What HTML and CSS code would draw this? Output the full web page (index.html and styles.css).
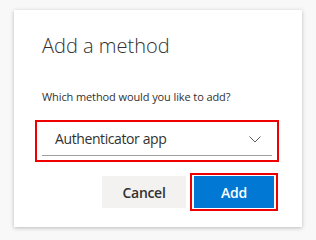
FILE: index.html
```html
<!DOCTYPE html>
<html lang="en">
<head>
    <meta charset="UTF-8">
    <meta name="viewport" content="width=device-width, initial-scale=1.0">
    <title>Add a method</title>
    <link rel="stylesheet" href="styles.css">
</head>
<body>
    <!-- Dialog card -->
    <div class="dialog">
        <h1 class="dialog-title">Add a method</h1>
        <p class="dialog-question">Which method would you like to add?</p>

        <!-- Method picker, outlined in red -->
        <div class="highlight select-box">
            <div class="select">
                <span class="select-value">Authenticator app</span>
                <svg class="chevron" width="12" height="7" viewBox="0 0 12 7">
                    <polyline points="0.5,0.5 6,6 11.5,0.5" fill="none" stroke="#605e5c" stroke-width="1"/>
                </svg>
            </div>
        </div>

        <div class="actions">
            <button class="btn btn-default">Cancel</button>
            <div class="highlight add-box">
                <button class="btn btn-primary">Add</button>
            </div>
        </div>
    </div>
</body>
</html>
```

FILE: styles.css
```css
/* Global Styles */
body, html {
    margin: 0;
    padding: 0;
    background: #f8f8f8;
    font-family: 'Open Sans', 'Noto Sans', sans-serif;
    color: #323130;
}

body {
    padding: 10px 14px;
}

/* Dialog */
.dialog {
    box-sizing: border-box;
    width: 288px;
    height: 217px;
    background: #ffffff;
    box-shadow: 0px 1px 4px rgba(0, 0, 0, 0.25);
    padding: 22px 23px 0 21px;
}

.dialog-title {
    margin: 0 0 0 7px;
    font-size: 20px;
    font-weight: 300;
    line-height: 28px;
    color: #323130;
}

.dialog-question {
    margin: 29px 0 0 7px;
    font-size: 11px;
    letter-spacing: -0.1px;
    line-height: 16px;
    color: #323130;
}

/* Red outlines */
.highlight {
    border: 2px solid #ee0000;
}

.select-box {
    margin-top: 15px;
    height: 38px;
    padding: 0 5px;
}

.select {
    display: flex;
    align-items: center;
    justify-content: space-between;
    height: 33px;
    padding: 0 11px 0 13px;
    border-bottom: 1px solid #a19f9d;
}

.select-value {
    font-size: 14px;
    letter-spacing: -0.4px;
}

.chevron {
    display: block;
    margin-top: 1px;
}

/* Buttons */
.actions {
    display: flex;
    justify-content: flex-end;
    align-items: center;
    gap: 4px;
    margin-top: 11px;
    padding-right: 1px;
}

.btn {
    height: 32px;
    border: none;
    font-family: inherit;
    font-size: 14px;
    font-weight: 600;
    letter-spacing: -0.3px;
    padding: 0;
}

.btn-default {
    width: 84px;
    background: #f3f2f1;
    color: #323130;
}

.add-box {
    padding: 1px 2px;
    background: #ffffff;
}

.btn-primary {
    display: block;
    width: 80px;
    background: #0078d4;
    color: #ffffff;
}
```
